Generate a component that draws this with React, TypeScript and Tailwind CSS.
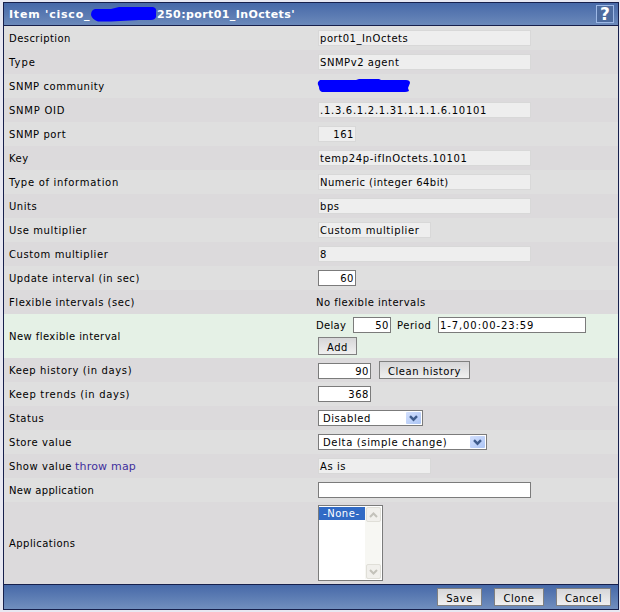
import React from "react";
import clsx from "clsx";

const rowBg = {
  light: "bg-[#dfdfdf]",
  dark: "bg-[#dcdadc]",
  green: "bg-[#e5f1e6]",
};

type RowProps = {
  label: React.ReactNode;
  labelClass?: string;
  tone: keyof typeof rowBg;
  height?: string;
  children?: React.ReactNode;
};

const Row = ({ label, labelClass, tone, height = "h-6", children }: RowProps) => (
  <div className={clsx("flex items-center pl-[5px]", height, rowBg[tone])}>
    <div className={clsx("w-[307px] shrink-0 pt-0.5", labelClass)}>{label}</div>
    <div className="flex items-center">{children}</div>
  </div>
);

type FieldProps = {
  value?: string;
  width: string;
  className?: string;
  readOnly?: boolean;
};

const Field = ({ value = "", width, className, readOnly }: FieldProps) => (
  <div
    className={clsx(
      "ml-0.5 flex h-4 items-center border px-px pt-0.5",
      readOnly
        ? "border-[#d8d8d8] bg-[#eeeeee]"
        : "border-[#7b7b7b] bg-white",
      width,
      className
    )}
  >
    {value}
  </div>
);

const Btn = ({ children, className }: { children: React.ReactNode; className?: string }) => (
  <button
    type="button"
    className={clsx(
      "flex h-[18px] items-center justify-center border border-[#808080] bg-linear-to-b from-[#d6d6d8] to-[#f0f0f0] pt-1",
      className
    )}
  >
    {children}
  </button>
);

type SelectProps = {
  value: string;
  className?: string;
};

const Select = ({ value, className }: SelectProps) => (
  <div
    className={clsx(
      "ml-0.5 flex h-4 items-center justify-between border border-[#7b7b7b] bg-white pr-px pl-1",
      className
    )}
  >
    <span className="pt-0.5">{value}</span>
    <span className="flex h-3 w-[15px] items-center justify-center rounded-[1px] bg-linear-to-br from-[#d3e0fd] to-[#acc5f5]">
      <svg width="9" height="7" viewBox="0 0 9 7" fill="none">
        <path d="M1 1.2 4.5 4.7 8 1.2" stroke="#3f5c8c" strokeWidth="2.4" />
      </svg>
    </span>
  </div>
);

const ScrollButton = ({ up }: { up?: boolean }) => (
  <span className="flex h-[15px] w-[15px] items-center justify-center rounded-[2px] border border-[#e0dfd8] bg-[#f1f0ec]">
    <svg width="9" height="6" viewBox="0 0 9 6" fill="none">
      <path
        d={up ? "M1 5 4.5 1.5 8 5" : "M1 1 4.5 4.5 8 1"}
        stroke="#c3c2ba"
        strokeWidth="2"
      />
    </svg>
  </span>
);

const App = () => {
  return (
    <div className="h-[612px] w-[620px] overflow-hidden bg-[#e8e8f2] pt-0.5 pl-[3px] font-['DejaVu_Sans',sans-serif] text-[10px] leading-3 tracking-[0.55px] whitespace-pre text-black">
      <div className="w-[616px] border border-[#17204c]">
        {/* Title bar */}
        <div className="flex h-[22px] items-center justify-between bg-linear-to-b from-[#4769a8] to-[#6b89ba] pr-1 pl-[5px] text-[11px] font-bold tracking-[0.4px] text-white">
          <div className="flex items-center">
            <span className="w-[82px] pt-0.5 tracking-[0.78px]">Item 'cisco_</span>
            <svg width="66" height="16" viewBox="0 0 66 16">
              <path
                d="M4 3 20 3 28 1 62 1Q66 2 65 6V11Q64 14 60 14H48L20 15.5H7Q1 13 0 9 0 4 4 3Z"
                fill="#0000ff"
              />
            </svg>
            <span className="pt-0.5">250:port01_InOctets'</span>
          </div>
          <span className="flex h-[18px] w-[18px] items-center justify-center border border-[#9db8e6] bg-[#4d6b9f] text-[17px] leading-none tracking-normal">
            ?
          </span>
        </div>

        {/* Item form */}
        <div className="border-y border-[#17204c]">
          <Row label="Description" labelClass="tracking-[0.45px]" tone="light">
            <Field readOnly value="port01_InOctets" width="w-[213px]" />
          </Row>
          <Row label="Type" labelClass="tracking-[1px]" tone="dark">
            <Field readOnly value="SNMPv2 agent" width="w-[213px]" />
          </Row>
          <Row label="SNMP community" tone="light">
            <svg width="94" height="16" viewBox="0 0 94 16" className="ml-px">
              <path
                d="M3 2H39L42 1H62L64 2H89Q93 2 93 5L91 10 92 13Q90 14 88 14H5Q2 13 2 9 0 6 1 4Z"
                fill="#0000ff"
              />
            </svg>
          </Row>
          <Row label="SNMP OID" labelClass="tracking-[0.75px]" tone="dark">
            <Field
              readOnly
              value=".1.3.6.1.2.1.31.1.1.1.6.10101"
              width="w-[213px]"
              className="tracking-[0.72px]"
            />
          </Row>
          <Row label="SNMP port" tone="light">
            <Field readOnly value="161" width="w-[38px]" className="justify-end" />
          </Row>
          <Row label="Key" tone="dark">
            <Field
              readOnly
              value="temp24p-ifInOctets.10101"
              width="w-[213px]"
              className="tracking-[0.65px]"
            />
          </Row>
          <Row label="Type of information" labelClass="tracking-[0.7px]" tone="light">
            <Field
              readOnly
              value="Numeric (integer 64bit)"
              width="w-[213px]"
              className="tracking-[0.47px]"
            />
          </Row>
          <Row label="Units" tone="dark">
            <Field readOnly value="bps" width="w-[213px]" />
          </Row>
          <Row label="Use multiplier" labelClass="tracking-[0.6px]" tone="light">
            <Field readOnly value="Custom multiplier" width="w-[113px]" className="tracking-[0.6px]" />
          </Row>
          <Row label="Custom multiplier" labelClass="tracking-[0.6px]" tone="dark">
            <Field readOnly value="8" width="w-[213px]" />
          </Row>
          <Row label="Update interval (in sec)" tone="light">
            <Field value="60" width="w-[38px]" className="justify-end" />
          </Row>
          <Row label="Flexible intervals (sec)" tone="dark">
            <span className="pt-0.5 tracking-[0.48px]">No flexible intervals</span>
          </Row>
          <Row
            label="New flexible interval"
            labelClass="tracking-[0.44px]"
            tone="green"
            height="h-11"
          >
            <div className="flex flex-col gap-1">
              <div className="flex items-center">
                <span className="w-[35px] pt-0.5 tracking-[0.3px]">Delay</span>
                <Field value="50" width="w-[38px]" className="justify-end" />
                <span className="ml-1.5 w-[39px] pt-0.5">Period</span>
                <Field
                  value="1-7,00:00-23:59"
                  width="w-[148px]"
                  className="tracking-[0.9px]"
                />
              </div>
              <Btn className="ml-0.5 w-[39px]">Add</Btn>
            </div>
          </Row>
          <Row label="Keep history (in days)" labelClass="tracking-[0.64px]" tone="dark">
            <Field value="90" width="w-[53px]" className="mt-0.5 justify-end" />
            <Btn className="ml-2 w-[91px]">Clean history</Btn>
          </Row>
          <Row label="Keep trends (in days)" labelClass="tracking-[0.69px]" tone="light">
            <Field value="368" width="w-[53px]" className="justify-end" />
          </Row>
          <Row label="Status" tone="dark">
            <Select value="Disabled" className="w-[105px]" />
          </Row>
          <Row label="Store value" tone="light">
            <Select
              value="Delta (simple change)"
              className="w-[169px] tracking-[0.65px]"
            />
          </Row>
          <Row
            tone="dark"
            label={
              <div className="flex items-center">
                <span className="w-[66px]">Show value</span>
                <a className="text-[11px] tracking-[0.2px] text-[#3f2f9c]">throw map</a>
              </div>
            }
          >
            <Field readOnly value="As is" width="w-[113px]" />
          </Row>
          <Row label="New application" labelClass="tracking-[0.33px]" tone="light">
            <Field width="w-[213px]" />
          </Row>
          <Row
            label="Applications"
            labelClass="tracking-[0.45px]"
            tone="dark"
            height="h-[82px]"
          >
            <div className="ml-0.5 flex h-[76px] w-[65px] justify-between border border-[#7b7b7b] bg-white py-px pr-px">
              <div className="h-[13px] w-[46px] bg-[#316ac5] pl-1 leading-[14px] text-white">
                -None-
              </div>
              <div className="flex w-4 flex-col items-center justify-between bg-[#f7f7f3]">
                <ScrollButton up />
                <ScrollButton />
              </div>
            </div>
          </Row>
        </div>

        {/* Action buttons */}
        <div className="flex h-6 items-center justify-end bg-linear-to-b from-[#4769a8] to-[#718fbe] pr-[7px]">
          <Btn className="w-[45px]">Save</Btn>
          <Btn className="ml-3 w-[50px]">Clone</Btn>
          <Btn className="ml-3 w-[55px]">Cancel</Btn>
        </div>
      </div>
    </div>
  );
};

export default App;
